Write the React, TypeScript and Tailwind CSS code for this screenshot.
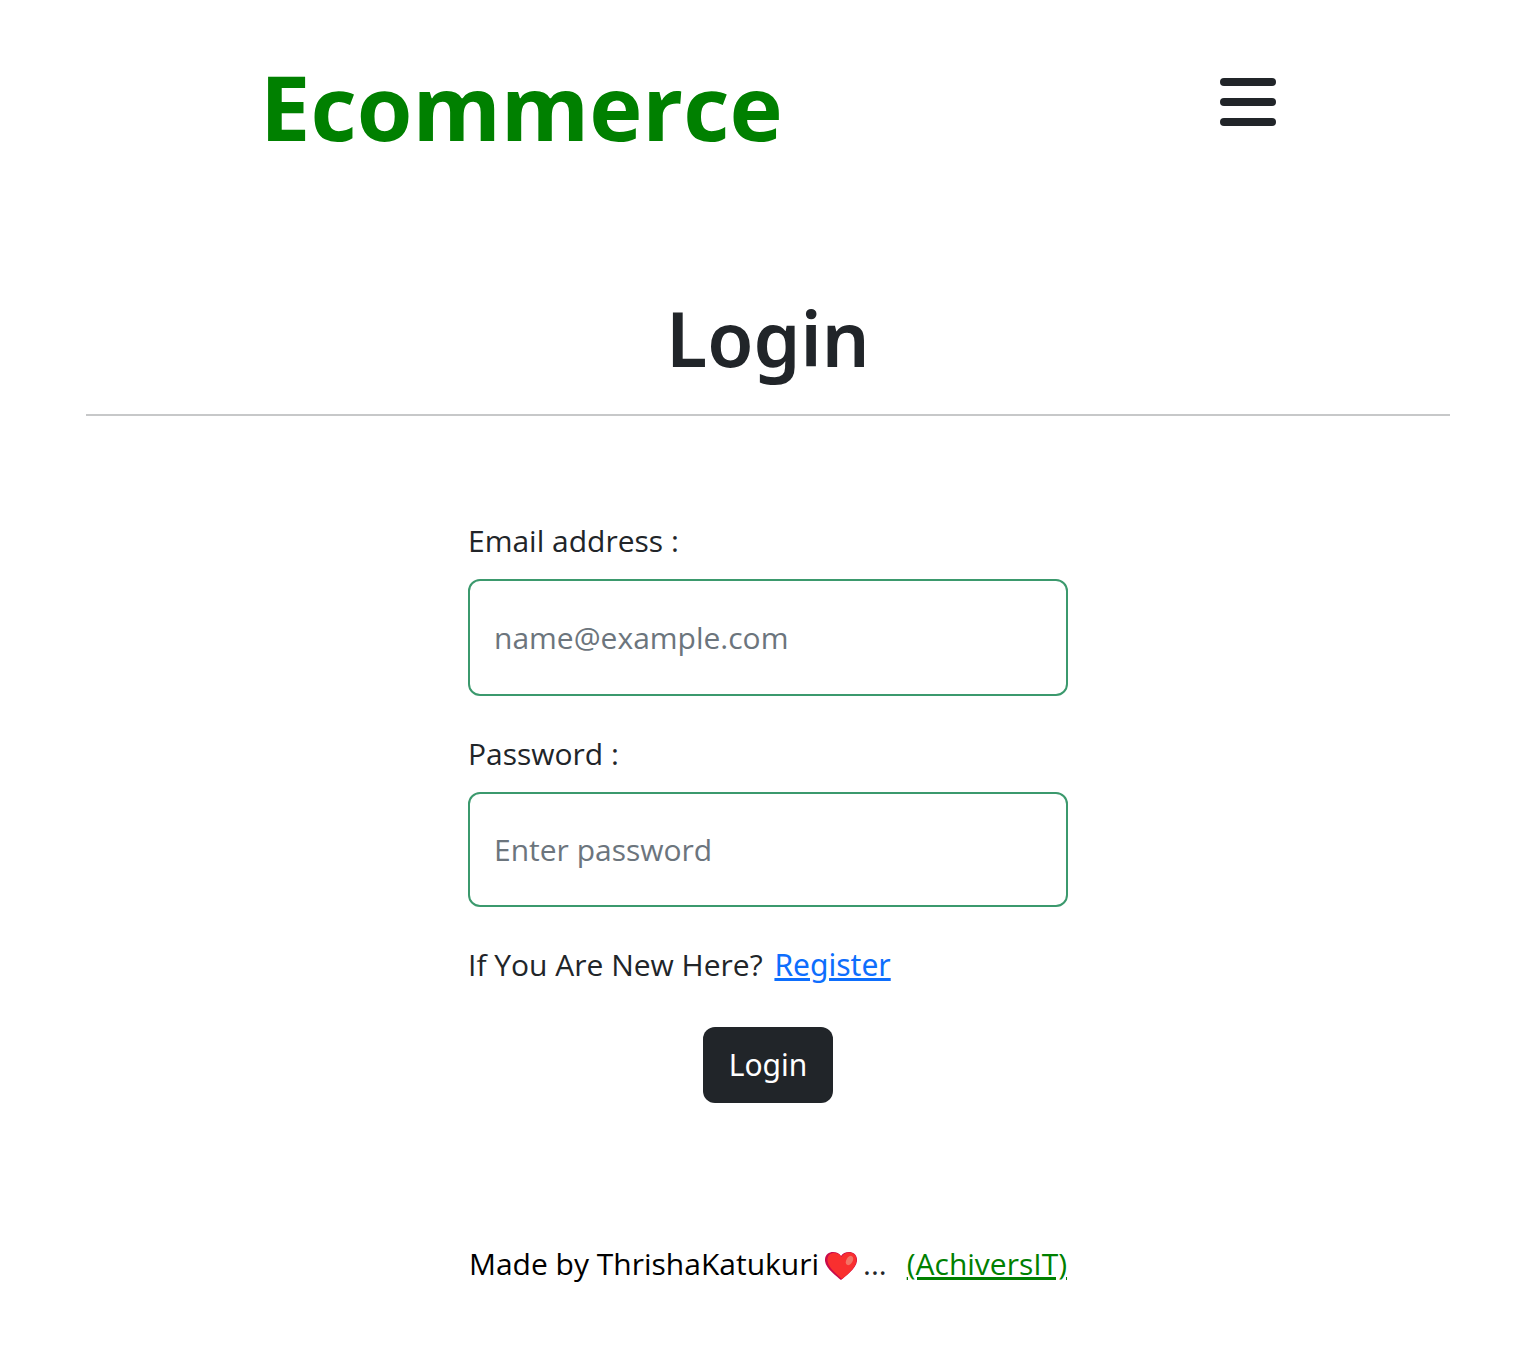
export default function App() {
  return (
    <div className="min-h-screen bg-white font-['Open_Sans',sans-serif] text-[30px] leading-[48px] text-[#212529]">
      <header className="mx-auto flex w-2/3 items-center justify-between pt-[50px] pl-1">
        <h1 className="text-[90px] leading-[112px] font-bold text-[#008000]">Ecommerce</h1>
        <button type="button" aria-label="Menu" className="mr-1 -mt-2 flex w-14 flex-col gap-3">
          <span className="h-2 rounded-full bg-[#212529]" />
          <span className="h-2 rounded-full bg-[#212529]" />
          <span className="h-2 rounded-full bg-[#212529]" />
        </button>
      </header>
      <main>
        <h2 className="mt-32 text-center font-['Noto_Sans',sans-serif] text-[75px] leading-[96px] font-semibold">Login</h2>
        <hr className="mx-[86px] mt-7 border-t-2 border-[#c7c8c9]" />
        <form className="mx-auto mt-[101px] w-[600px] max-w-full">
          <label htmlFor="email" className="block">Email address :</label>
          <input id="email" type="email" placeholder="name@example.com" className="mt-3.5 block h-[117px] w-full rounded-xl border-2 border-[#198754]/85 px-6 placeholder:text-[#6c757d]" />
          <label htmlFor="password" className="mt-[34px] block">Password :</label>
          <input id="password" type="password" placeholder="Enter password" className="mt-3.5 block h-[115px] w-full rounded-xl border-2 border-[#198754]/85 px-6 placeholder:text-[#6c757d]" />
          <p className="mt-[34px]">If You Are New Here? <a href="#register" className="ml-1 font-['Noto_Sans',sans-serif] text-[#0d6efd] underline">Register</a></p>
          <button type="submit" className="mx-auto mt-[38px] block rounded-xl bg-[#212529] px-[26px] py-3.5 font-['Noto_Sans',sans-serif] text-white">Login</button>
        </form>
      </main>
      <footer className="mt-[137px] flex items-center justify-center pb-16 text-black">
        <span>Made by ThrishaKatukuri</span>
        <svg viewBox="0 0 32 28" className="mx-1.5 mt-1 h-7 w-8" role="img" aria-label="love">
          <path d="M16 28C12 24.500 1 17 0 9C-.5 3 3.500 0 8 0C11.500 0 14.500 1.500 16 4C17.500 1.500 20.500 0 24 0C28.500 0 32.500 3 32 9C31 17 20 24.500 16 28Z" fill="#ca0b4a" />
          <path d="M17 27C13 23 3.500 16.500 2.500 9C2 4 5 1 9 1C12.500 1 15 2.500 16.500 5C18 2 20.500 .5 24 .5C28.500 .5 32 3.500 31.500 9C30.500 16.500 21 23.500 17 27Z" fill="#f92f2f" />
          <ellipse cx="24.500" cy="8.500" rx="3.200" ry="5" transform="rotate(30 24.500 8.500)" fill="#f37366" />
        </svg>
        <span className="text-[#212529]">...</span>
        <a href="#achiversit" className="ml-5 text-[#008000] underline">(AchiversIT)</a>
      </footer>
    </div>
  );
}
